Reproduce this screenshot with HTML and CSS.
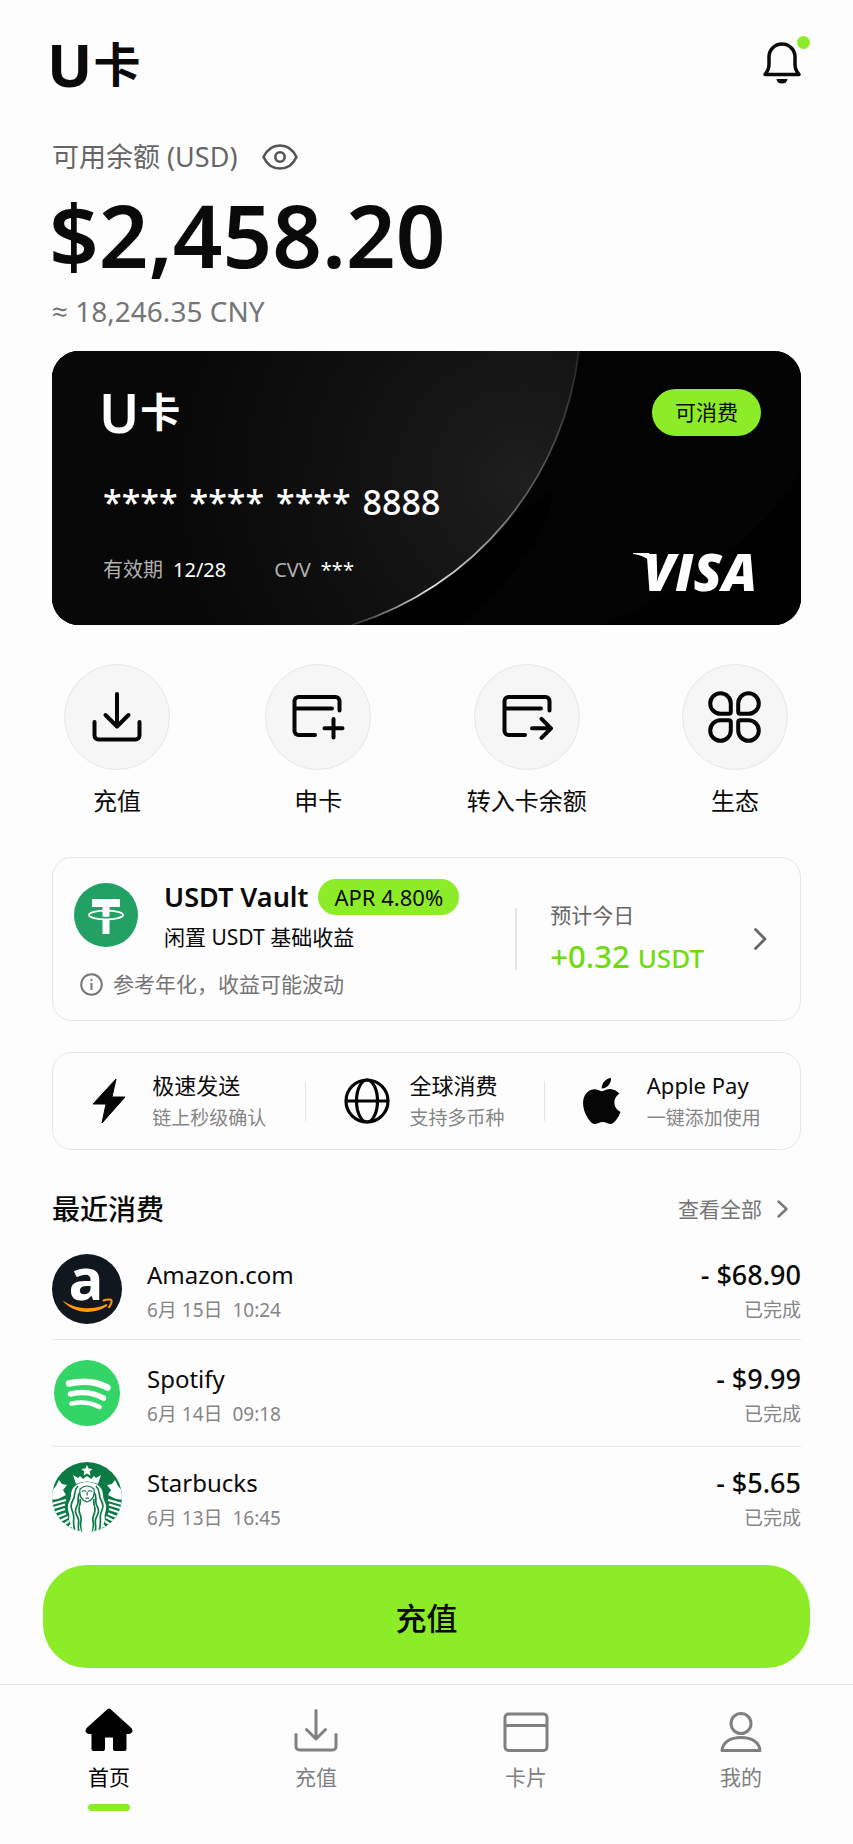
FILE: index.html
```
<!DOCTYPE html>
<html lang="zh-CN">
  <head>
    <meta charset="UTF-8" />
    <meta name="viewport" content="width=device-width, initial-scale=1.0" />
    <title>U卡</title>
    <link rel="stylesheet" href="styles.css">
  </head>
  <body>
    <main class="page">
      <header class="header">
        <h1 class="logo"><span class="logo-u">U</span>卡</h1>
        <button type="button" class="bell" aria-label="通知">
          <svg width="41" height="48" viewBox="0 0 41 48" fill="none">
            <path d="M5 38.500h34c-2.600-3-4-6-4-10V21a13 13 0 0 0-26 0v7.500c0 4-1.400 7-4 10z" stroke="#0a0a0a" stroke-width="3.500" stroke-linejoin="round" />
            <path d="M16.500 43h11a5.500 4.500 0 0 1-11 0z" fill="#0a0a0a" />
          </svg>
          <span class="bell-dot"></span>
        </button>
      </header>

      <section class="balance">
        <div class="balance-label">
          <span>可用余额 (USD)</span>
          <button type="button" class="eye" aria-label="隐藏余额">
            <svg width="36" height="26" viewBox="0 0 36 26" fill="none" stroke="#555" stroke-width="2.600" stroke-linejoin="round">
              <path d="M1.500 13C5 5.500 11 1.500 18 1.500S31 5.500 34.500 13C31 20.500 25 24.500 18 24.500S5 20.500 1.500 13z" />
              <circle cx="18" cy="13" r="4.700" />
            </svg>
          </button>
        </div>
        <div class="amount">$2,458.20</div>
        <div class="approx">≈ 18,246.35 CNY</div>
      </section>

      <section class="bank-card">
        <svg class="card-bg" viewBox="0 0 749 274" preserveAspectRatio="none" aria-hidden="true">
          <defs>
            <radialGradient id="disc" gradientUnits="userSpaceOnUse" cx="470" cy="130" r="360">
              <stop offset="0" stop-color="#1e1e1e" />
              <stop offset="0.500" stop-color="#101010" />
              <stop offset="1" stop-color="#080808" />
            </radialGradient>
            <linearGradient id="rim" gradientUnits="userSpaceOnUse" x1="526" y1="0" x2="300" y2="274">
              <stop offset="0" stop-color="#fff" stop-opacity="0.100" />
              <stop offset="0.450" stop-color="#fff" stop-opacity="0.350" />
              <stop offset="0.780" stop-color="#fff" stop-opacity="0.900" />
              <stop offset="1" stop-color="#fff" stop-opacity="0.150" />
            </linearGradient>
          </defs>
          <rect width="749" height="274" fill="#030303" />
          <path d="M749 122Q690 215 552 274H749z" fill="#000" />
          <path d="M500 140Q500 190 410 274H300z" fill="#000" />
          <path d="M527 0A327 327 0 0 1 300 274H0V0z" fill="url(#disc)" />
          <path d="M527 0A327 327 0 0 1 300 274" fill="none" stroke="url(#rim)" stroke-width="1.800" />
        </svg>
        <div class="card-row">
          <div class="card-logo"><span class="card-logo-u">U</span>卡</div>
          <span class="status">可消费</span>
        </div>
        <div class="card-number"><span>****</span><span>****</span><span>****</span><span>8888</span></div>
        <div class="card-row card-bottom">
          <dl class="card-info">
            <div><dt>有效期</dt><dd>12/28</dd></div>
            <div><dt>CVV</dt><dd>***</dd></div>
          </dl>
          <svg class="visa" width="128" height="40" viewBox="0 -2 128 40" fill="#fff" role="img" aria-label="VISA">
            <path d="M0 1H16L20 14C16 6 9 3 0 2z" />
            <text x="10" y="39" class="visa-text">VISA</text>
          </svg>
        </div>
      </section>

      <nav class="actions">
        <a href="#topup" class="action">
          <span class="action-icon">
            <svg width="50" height="50" viewBox="0 0 50 50">
              <path d="M25 2v32M13.500 23 25 34.500 36.500 23M2.500 30v13.500a4 4 0 0 0 4 4h37a4 4 0 0 0 4-4V30" />
            </svg>
          </span>
          充值
        </a>
        <a href="#apply" class="action">
          <span class="action-icon">
            <svg width="52" height="46" viewBox="0 0 52 46">
              <path d="M47.500 16.500V7a4 4 0 0 0-4-4h-37a4 4 0 0 0-4 4v30a4 4 0 0 0 4 4h16.500M3 14.500h37M41.500 25v18.500M32.500 34.300h18" />
            </svg>
          </span>
          申卡
        </a>
        <a href="#transfer" class="action">
          <span class="action-icon">
            <svg width="52" height="46" viewBox="0 0 52 46">
              <path d="M48.500 16.500V7a4 4 0 0 0-4-4h-37a4 4 0 0 0-4 4v30a4 4 0 0 0 4 4h16.500M4 14.500h36M31 34.300h18M40.500 24.800l9.500 9.500-9.500 9.500" />
            </svg>
          </span>
          转入卡余额
        </a>
        <a href="#eco" class="action">
          <span class="action-icon">
            <svg width="53" height="52" viewBox="0 0 53 52">
              <path d="M22.800 12.500a10.300 10.300 0 1 0-10.300 10.300h8.300a2 2 0 0 0 2-2zM30.200 12.500a10.300 10.300 0 1 1 10.300 10.300h-8.300a2 2 0 0 1-2-2zM22.800 39.500a10.300 10.300 0 1 1-10.300-10.300h8.300a2 2 0 0 1 2 2zM30.200 39.500a10.300 10.300 0 1 0 10.300-10.300h-8.300a2 2 0 0 0-2 2z" />
            </svg>
          </span>
          生态
        </a>
      </nav>

      <a href="#vault" class="vault">
        <div class="vault-left">
          <div class="vault-top">
            <svg width="64" height="64" viewBox="0 0 64 64">
              <circle cx="32" cy="32" r="32" fill="#23a164" />
              <path d="M18 16h28v8H35.500v27h-7V24H18z" fill="#fff" />
              <path d="M28 33.500q4 .8 8 0v3.500h-8z" fill="#23a164" />
              <ellipse cx="32" cy="32" rx="17" ry="4.300" fill="none" stroke="#fff" stroke-width="1.800" />
            </svg>
            <div>
              <div class="vault-title">USDT Vault <span class="apr">APR 4.80%</span></div>
              <div class="vault-sub">闲置 USDT 基础收益</div>
            </div>
          </div>
          <div class="vault-note">
            <svg width="23" height="23" viewBox="0 0 23 23" fill="none" stroke="#777" stroke-width="2">
              <circle cx="11.500" cy="11.500" r="10.300" />
              <path d="M11.500 10v7M11.500 6v2" />
            </svg>
            参考年化，收益可能波动
          </div>
        </div>
        <span class="vault-line"></span>
        <div class="vault-today">
          <div class="today-label">预计今日</div>
          <div class="today-value">+0.32 <span class="unit">USDT</span></div>
        </div>
        <svg width="13" height="22" viewBox="0 0 13 22" fill="none" stroke="#666" stroke-width="2.800" stroke-linecap="round" stroke-linejoin="round">
          <path d="M1.500 1.500 11 11l-9.500 9.500" />
        </svg>
      </a>

      <section class="features">
        <div class="feature">
          <svg class="bolt" width="34" height="46" viewBox="0 0 34 46">
            <path d="M24 1 1 26h13L10 45 33 19H20z" fill="#050505" stroke="#050505" stroke-linejoin="round" />
          </svg>
          <div>
            <div class="feature-title">极速发送</div>
            <div class="feature-sub">链上秒级确认</div>
          </div>
        </div>
        <div class="feature">
          <svg width="46" height="46" viewBox="0 0 46 46" fill="none" stroke="#050505" stroke-width="3.200">
            <circle cx="23" cy="23" r="21" />
            <ellipse cx="23" cy="23" rx="10.500" ry="21" />
            <path d="M2 23h42" />
          </svg>
          <div>
            <div class="feature-title">全球消费</div>
            <div class="feature-sub">支持多币种</div>
          </div>
        </div>
        <div class="feature">
          <svg width="38" height="46" viewBox="2.200 0 19.800 24">
            <path fill="#050505" d="M12.152 6.896c-.948 0-2.415-1.078-3.960-1.040-2.040.027-3.910 1.183-4.961 3.014-2.117 3.675-.546 9.103 1.519 12.090 1.013 1.454 2.208 3.090 3.792 3.039 1.520-.065 2.090-.987 3.935-.987 1.831 0 2.350.987 3.960.948 1.637-.026 2.676-1.480 3.676-2.948 1.156-1.688 1.636-3.325 1.662-3.415-.039-.013-3.182-1.221-3.220-4.857-.026-3.040 2.480-4.494 2.597-4.559-1.429-2.090-3.623-2.324-4.390-2.376-2-.156-3.675 1.090-4.610 1.090zM15.530 3.830c.843-1.012 1.400-2.427 1.245-3.830-1.207.052-2.662.805-3.532 1.818-.780.896-1.454 2.338-1.273 3.714 1.338.104 2.715-.688 3.559-1.701" />
          </svg>
          <div>
            <div class="feature-title">Apple Pay</div>
            <div class="feature-sub">一键添加使用</div>
          </div>
        </div>
      </section>

      <div class="section-head">
        <h2>最近消费</h2>
        <a href="#all" class="more">
          查看全部
          <svg width="11" height="18" viewBox="0 0 11 18" fill="none" stroke="#777" stroke-width="2.400" stroke-linecap="round" stroke-linejoin="round">
            <path d="M1.500 1.500 9.500 9l-8 7.500" />
          </svg>
        </a>
      </div>

      <ul class="list">
        <li class="item">
          <span class="avatar">
            <svg width="70" height="70" viewBox="0 0 70 70">
              <circle cx="35" cy="35" r="35" fill="#11171e" />
              <text x="34" y="46" text-anchor="middle" class="amazon-a">a</text>
              <path d="M10.500 46.500c14 9.500 31 10 44 3.500l1 1.700c-14 9.500-34 8.300-45-5.200z" fill="#ff9a0a" />
              <path d="M51.500 46.500c4-1.500 7.500-1 8-.2s-.3 4.500-2.500 7" fill="none" stroke="#ff9a0a" stroke-width="2" stroke-linejoin="round" stroke-linecap="round" />
            </svg>
          </span>
          <div class="item-main">
            <div class="item-name">Amazon.com</div>
            <div class="item-date">6月 15日&nbsp; 10:24</div>
          </div>
          <div class="item-side">
            <div class="item-price">- $68.90</div>
            <div class="item-state">已完成</div>
          </div>
        </li>
        <li class="item">
          <span class="avatar">
            <svg width="66" height="66" viewBox="0 0 66 66">
              <circle cx="33" cy="33" r="33" fill="#33d566" />
              <g fill="none" stroke="#fff" stroke-linecap="round">
                <path d="M15 23.500q21.500-5 38.500 4" stroke-width="6.500" />
                <path d="M16.500 34q18-4.300 33 4.200" stroke-width="5.500" />
                <path d="M17.500 43.500q15.500-3.200 28 3.500" stroke-width="4.600" />
              </g>
            </svg>
          </span>
          <div class="item-main">
            <div class="item-name">Spotify</div>
            <div class="item-date">6月 14日&nbsp; 09:18</div>
          </div>
          <div class="item-side">
            <div class="item-price">- $9.99</div>
            <div class="item-state">已完成</div>
          </div>
        </li>
        <li class="item">
          <span class="avatar">
            <svg width="70" height="70" viewBox="0 0 70 70">
              <defs>
                <clipPath id="round"><circle cx="35" cy="35" r="35" /></clipPath>
              </defs>
              <g clip-path="url(#round)">
                <rect width="70" height="70" fill="#0b7a45" />
                <!-- star and crown -->
                <path d="M35 3l1.600 3.600 4 .3-3 2.700.9 3.900L35 11.400l-3.500 2.100.9-3.900-3-2.700 4-.3z" fill="#fff" />
                <path d="M21 13l5 3 2-2 3 3 4-3 4 3 3-3 2 2 5-3-3 9q-11-5-22 0z" fill="#fff" />
                <!-- hair -->
                <path d="M35 20c-9 0-16 5-16 13 0 6-4 8-3 14s2 6 1 11l4 12h28l4-12c-1-5 0-5 1-11s-3-8-3-14c0-8-7-13-16-13z" fill="#fff" />
                <g fill="none" stroke="#0b7a45" stroke-width="1.700">
                  <path d="M26 24c-5 5-2 9-5 14s-2 8 0 13-1 9 2 18M28 30c-4 6 0 9-3 14s-1 8 1 12-1 8 1 14M28 37c1 5-1 7-1 11s3 6 2 11 0 6 1 11" />
                  <path d="M44 24c5 5 2 9 5 14s2 8 0 13 1 9-2 18M42 30c4 6 0 9 3 14s1 8-1 12 1 8-1 14M42 37c-1 5 1 7 1 11s-3 6-2 11 0 6-1 11" />
                </g>
                <!-- face and body -->
                <path d="M28 27q7-6 14 0c1 6-1 11-7 13-6-2-8-7-7-13z" fill="#fff" stroke="#0b7a45" stroke-width="1.200" />
                <path d="M30 29.500q2-1.500 4 0M36 29.500q2-1.500 4 0M33.500 36.200h3.500M35.200 30v3.500" fill="none" stroke="#0b7a45" stroke-width="1.200" />
                <path d="M30 42q5 4 10 0c4 3 1 8 0 11s1 10 0 17H30c-1-7 1-14 0-17s-4-8 0-11z" fill="#fff" />
                <!-- tails -->
                <path d="M7 18l3 4 5 1-4 5 3 5-8 4-8 1v-8q6-4 9-12zM63 18l-3 4-5 1 4 5-3 5 8 4 8 1v-8q-6-4-9-12z" fill="#fff" />
                <g fill="none" stroke="#fff" stroke-width="2.200">
                  <path d="M0 42l14-4M0 46.500l13-4M1 51l12-4M4 55.500l10-4M6 60l10-5M10 64l7-5M15 68l4-5" />
                  <path d="M70 42l-14-4M70 46.500l-13-4M69 51l-12-4M66 55.500l-10-4M64 60l-10-5M60 64l-7-5M55 68l-4-5" />
                </g>
              </g>
            </svg>
          </span>
          <div class="item-main">
            <div class="item-name">Starbucks</div>
            <div class="item-date">6月 13日&nbsp; 16:45</div>
          </div>
          <div class="item-side">
            <div class="item-price">- $5.65</div>
            <div class="item-state">已完成</div>
          </div>
        </li>
      </ul>

      <button type="button" class="topup">充值</button>
    </main>

    <nav class="tabbar">
      <a href="#home" class="tab active">
        <svg width="48" height="46" viewBox="0 0 48 46">
          <path d="M24 3.500 45 22.500c1 1.500 0 2.500-1 2.500H39.500V42H30V30.500a2 2 0 0 0-2-2h-8a2 2 0 0 0-2 2V42H8.500V25H4c-1 0-2-1-1-2.500z" fill="#000" stroke="#000" stroke-width="4" stroke-linejoin="round" />
        </svg>
        首页
      </a>
      <a href="#topup" class="tab">
        <svg width="44" height="46" viewBox="0 0 44 46" fill="none" stroke="#808080" stroke-width="3" stroke-linecap="round" stroke-linejoin="round">
          <path d="M22 3.500v28M12.500 22.500 22 32l9.500-9.500M2 27.500v12a3.500 3.500 0 0 0 3.500 3.500h33a3.500 3.500 0 0 0 3.500-3.500v-12" />
        </svg>
        充值
      </a>
      <a href="#cards" class="tab">
        <svg width="46" height="46" viewBox="0 0 46 46" fill="none" stroke="#808080" stroke-width="3">
          <rect x="2" y="7" width="42" height="36.500" rx="3.500" />
          <path d="M2 18.500h42" />
        </svg>
        卡片
      </a>
      <a href="#me" class="tab">
        <svg width="42" height="46" viewBox="0 0 42 46" fill="none" stroke="#808080" stroke-width="3" stroke-linejoin="round">
          <circle cx="21" cy="16.500" r="10" />
          <path d="M2 43.500c.5-8 8-13 19-13s18.500 5 19 13z" />
        </svg>
        我的
      </a>
    </nav>
  </body>
</html>
```
FILE: styles.css
```
* {
  box-sizing: border-box;
}
body {
  margin: 0;
  background: #fdfdfd;
  color: #0a0a0a;
  font-family: "Noto Sans", "Noto Sans CJK SC", sans-serif;
}
h1, h2, dl, dd, ul {
  margin: 0;
  padding: 0;
}
a {
  color: inherit;
  text-decoration: none;
}
button {
  border: none;
  background: none;
  padding: 0;
  font-family: inherit;
  color: inherit;
  cursor: pointer;
}
svg {
  display: block;
  flex: none;
  overflow: visible;
}
.page {
  padding: 36px 52px 0;
}

/* header */
.header {
  display: flex;
  justify-content: space-between;
  align-items: flex-start;
  height: 105px;
}
.logo {
  display: flex;
  align-items: center;
  gap: 1px;
  margin-left: -5px;
  font-size: 47px;
  line-height: 56px;
  font-weight: 700;
}
.logo-u {
  font-size: 60px;
}
.bell {
  position: relative;
}
.bell-dot {
  position: absolute;
  top: 0;
  right: -9px;
  width: 13px;
  height: 13px;
  border-radius: 50%;
  background: #8cec28;
}

/* balance */
.balance-label {
  display: flex;
  align-items: center;
  gap: 24px;
  font-size: 27px;
  line-height: 32px;
  color: #666;
}
.amount {
  margin-top: 19px;
  margin-left: -3px;
  font-size: 87px;
  line-height: 84px;
  font-weight: 600;
}
.approx {
  margin-top: 18px;
  font-family: "Noto Sans", "Open Sans", sans-serif;
  font-size: 28px;
  line-height: 34px;
  color: #757575;
}

/* bank card */
.bank-card {
  position: relative;
  overflow: hidden;
  margin-top: 23px;
  padding: 35px 40px 35px 51px;
  border-radius: 27px;
  background: #030303;
  color: #fff;
}
.card-bg {
  position: absolute;
  top: 0;
  left: 0;
  width: 100%;
  height: 100%;
}
.card-row,
.card-number {
  position: relative;
  display: flex;
  align-items: center;
}
.card-row {
  justify-content: space-between;
}
.card-logo {
  display: flex;
  align-items: center;
  gap: 1px;
  margin-left: -4px;
  font-size: 40px;
  line-height: 52px;
  font-weight: 600;
}
.card-logo-u {
  font-size: 54px;
}
.status {
  padding: 0 23px;
  border-radius: 24px;
  background: #8cec28;
  color: #0a0a0a;
  font-size: 21px;
  line-height: 47px;
}
.card-number {
  gap: 12px;
  margin-top: 40px;
  font-size: 34px;
  line-height: 48px;
  font-weight: 500;
}
.card-bottom {
  margin-top: 24px;
}
.card-info {
  display: flex;
  gap: 48px;
  font-size: 20px;
  line-height: 28px;
}
.card-info div {
  display: flex;
  gap: 10px;
}
.card-info dt {
  color: #b0b0b0;
}
.visa-text {
  font-family: "Open Sans", "Noto Sans", sans-serif;
  font-size: 52px;
  font-weight: 800;
  font-style: italic;
}

/* quick actions */
.actions {
  display: flex;
  justify-content: space-between;
  margin-top: 39px;
  padding: 0 13px 0 12px;
}
.action {
  display: flex;
  flex-direction: column;
  align-items: center;
  gap: 16px;
  font-size: 24px;
  line-height: 30px;
}
.action-icon {
  display: flex;
  align-items: center;
  justify-content: center;
  width: 106px;
  height: 106px;
  border: 1px solid #e8e8e8;
  border-radius: 50%;
  background: #f6f6f6;
}
.action-icon svg {
  fill: none;
  stroke: #050505;
  stroke-width: 4;
  stroke-linecap: round;
  stroke-linejoin: round;
}

/* vault */
.vault {
  display: flex;
  align-items: center;
  margin-top: 41px;
  padding: 21px 33px 22px 21px;
  border: 1px solid #e8e8e8;
  border-radius: 20px;
}
.vault-top {
  display: flex;
  align-items: center;
  gap: 26px;
}
.vault-title {
  display: flex;
  align-items: center;
  gap: 10px;
  font-size: 27px;
  line-height: 36px;
  font-weight: 600;
}
.apr {
  padding: 0 16px;
  border-radius: 18px;
  background: #8cec28;
  font-size: 22px;
  font-weight: 400;
}
.vault-sub {
  margin-top: 8px;
  font-size: 21px;
  line-height: 28px;
}
.vault-note {
  display: flex;
  align-items: center;
  gap: 10px;
  margin-top: 19px;
  padding-left: 6px;
  font-size: 21px;
  line-height: 28px;
  color: #757575;
}
.vault-line {
  width: 2px;
  height: 62px;
  margin: 0 33px 0 auto;
  background: #e4e4e4;
}
.vault-today {
  margin-right: 50px;
}
.today-label {
  font-size: 21px;
  line-height: 28px;
  color: #666;
}
.today-value {
  margin-top: 8px;
  font-size: 31px;
  line-height: 38px;
  font-weight: 500;
  color: #70dc10;
}
.unit {
  font-size: 26px;
}

/* features */
.features {
  display: flex;
  align-items: center;
  margin-top: 31px;
  height: 98px;
  border: 1px solid #e8e8e8;
  border-radius: 20px;
}
.feature {
  position: relative;
  display: flex;
  flex: 1 1 auto;
  align-items: center;
  justify-content: center;
  gap: 19px;
}
.feature:first-child,
.feature:last-child {
  gap: 26px;
}
.feature + .feature::before {
  content: "";
  position: absolute;
  left: 0;
  width: 1px;
  height: 40px;
  background: #e4e4e4;
}
.feature-title {
  font-size: 22px;
  line-height: 30px;
}
.feature-sub {
  margin-top: 3px;
  font-size: 19px;
  line-height: 30px;
  color: #858585;
}

/* recent payments */
.section-head {
  display: flex;
  justify-content: space-between;
  align-items: center;
  margin-top: 40px;
  padding-right: 13px;
}
.section-head h2 {
  font-size: 28px;
  line-height: 38px;
  font-weight: 500;
}
.more {
  display: flex;
  align-items: center;
  gap: 15px;
  font-size: 21px;
  line-height: 28px;
  color: #757575;
}
.list {
  margin-top: 11px;
  list-style: none;
}
.item {
  display: flex;
  align-items: center;
  height: 100px;
}
.item + .item {
  border-top: 1px solid #e8e8e8;
}
.item:nth-child(2) {
  height: 107px;
}
.avatar {
  display: flex;
  align-items: center;
  justify-content: center;
  width: 70px;
  height: 70px;
  margin-right: 25px;
}
.amazon-a {
  fill: #fff;
  font-family: "Open Sans", "Noto Sans", sans-serif;
  font-size: 58px;
  font-weight: 700;
}
.item-main,
.item-side {
  padding-top: 8px;
}
.item-main {
  flex: 1;
}
.item-name {
  font-size: 24px;
  line-height: 34px;
}
.item-date {
  font-size: 19px;
  line-height: 36px;
  color: #858585;
}
.item-side {
  text-align: right;
}
.item-price {
  font-size: 27px;
  line-height: 34px;
  font-weight: 500;
}
.item-state {
  font-size: 19px;
  line-height: 36px;
  color: #858585;
}
.topup {
  display: block;
  width: calc(100% + 18px);
  height: 103px;
  margin: 19px -9px 0;
  border-radius: 44px;
  background: #8cec28;
  font-size: 31px;
  font-weight: 500;
}

/* bottom tabs */
.tabbar {
  display: grid;
  grid-template-columns: 218fr 196fr 224fr 206fr;
  margin-top: 16px;
  padding: 22px 9px 32px 0;
  border-top: 1px solid #e8e8e8;
}
.tab {
  display: flex;
  flex-direction: column;
  align-items: center;
  gap: 10px;
  font-size: 21px;
  line-height: 28px;
  color: #808080;
}
.tab.active {
  color: #000;
}
.tab.active::after {
  content: "";
  width: 42px;
  height: 7px;
  margin-top: 3px;
  border-radius: 4px;
  background: #8cec28;
}
```
